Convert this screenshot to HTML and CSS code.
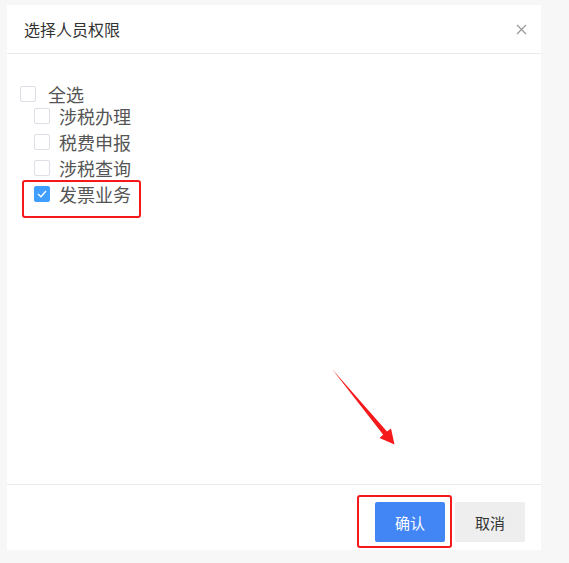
FILE: index.html
```html
<!DOCTYPE html>
<html lang="zh-CN">
<head>
    <meta charset="UTF-8">
    <meta name="viewport" content="width=device-width, initial-scale=1.0">
    <title>选择人员权限</title>
    <link rel="stylesheet" href="styles.css">
</head>
<body>
    <div class="dialog">
        <div class="dialog-header">
            <span class="dialog-title">选择人员权限</span>
            <span class="dialog-close">
                <svg width="11" height="11" viewBox="0 0 11 11"><path d="M1 1L10 10M10 1L1 10" stroke="#999" stroke-width="1.2" fill="none"/></svg>
            </span>
        </div>
        <div class="dialog-body">
            <label class="check check-all">
                <span class="box"></span>
                <span class="label">全选</span>
            </label>
            <div class="check-group">
                <label class="check"><span class="box"></span><span class="label">涉税办理</span></label>
                <label class="check"><span class="box"></span><span class="label">税费申报</span></label>
                <label class="check"><span class="box"></span><span class="label">涉税查询</span></label>
                <label class="check checked">
                    <span class="box">
                        <svg width="10" height="8" viewBox="0 0 10 8"><path d="M1 4L4 6.8L9 1" stroke="#fff" stroke-width="1.4" fill="none"/></svg>
                    </span>
                    <span class="label">发票业务</span>
                </label>
            </div>
        </div>
        <div class="dialog-footer">
            <button class="btn btn-primary">确认</button>
            <button class="btn btn-default">取消</button>
        </div>
    </div>

    <!-- annotation marks -->
    <div class="mark mark-check"></div>
    <div class="mark mark-btn"></div>
    <svg class="arrow" width="569" height="563" viewBox="0 0 569 563">
        <polygon points="332,369 387,431.6 391,428.4 394.5,444.5 379.5,438 383.2,434.8" fill="#f5191b"/>
    </svg>
</body>
</html>
```
FILE: styles.css
```css
body {
    margin: 0;
    background: #f7f7f7;
    font-family: "Noto Sans CJK SC", "Microsoft YaHei", sans-serif;
}

.dialog {
    margin: 5px 0 0 7px;
    width: 534px;
    height: 545px;
    background: #fff;
    display: flex;
    flex-direction: column;
}

.dialog-header {
    height: 48px;
    padding: 0 14px 0 17px;
    border-bottom: 1px solid #ebebeb;
    display: flex;
    align-items: center;
    justify-content: space-between;
}

.dialog-title {
    font-size: 16px;
    color: #333;
}

.dialog-close {
    display: flex;
}

.dialog-body {
    flex: 1;
    padding: 31px 0 0 13px;
    border-bottom: 1px solid #ebebeb;
}

.check {
    display: flex;
    align-items: center;
    height: 26px;
    font-size: 18px;
    line-height: 18px;
    color: #555;
}

.check-all {
    height: 18px;
}

.box {
    width: 14px;
    height: 14px;
    border: 1px solid #dcdfe6;
    border-radius: 2px;
    background: #fff;
    display: flex;
    align-items: center;
    justify-content: center;
}

.check-all .label {
    margin-left: 12px;
}

.check-group {
    padding-left: 14px;
}

.check-group .label {
    margin-left: 9px;
}

.checked .box {
    background: #409eff;
    border-color: #409eff;
}

.dialog-footer {
    height: 65px;
    padding-right: 16px;
    display: flex;
    justify-content: flex-end;
    align-items: flex-start;
    gap: 10px;
    padding-top: 17px;
    box-sizing: border-box;
}

.btn {
    width: 70px;
    height: 40px;
    border: none;
    border-radius: 2px;
    font-family: inherit;
    font-size: 15px;
}

.btn-primary {
    background: #4285f4;
    color: #fff;
}

.btn-default {
    background: #eee;
    color: #333;
}

.mark {
    position: absolute;
    border: 2px solid #f5191b;
    border-radius: 3px;
}

.mark-check {
    left: 22px;
    top: 180px;
    width: 115px;
    height: 34px;
}

.mark-btn {
    left: 357px;
    top: 495px;
    width: 91px;
    height: 49px;
}

.arrow {
    position: absolute;
    left: 0;
    top: 0;
    pointer-events: none;
}
```
